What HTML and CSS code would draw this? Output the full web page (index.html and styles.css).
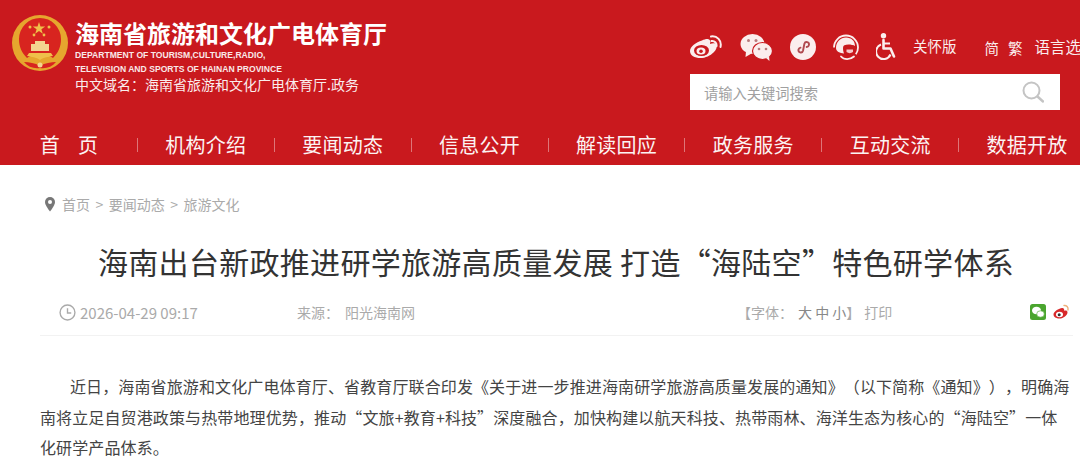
FILE: index.html
```html
<!DOCTYPE html>
<html lang="zh-CN">
<head>
<meta charset="UTF-8" />
<title>海南省旅游和文化广电体育厅</title>
<link rel="stylesheet" href="styles.css">
</head>
<body>

<!-- 顶部 -->
<header class="header">
  <div class="header-top">
    <div class="brand">
      <svg class="emblem" viewBox="0 0 60 60">
        <circle cx="30" cy="30" r="28" fill="#e6a62e"/>
        <path d="M30 5a21 21 0 0 1 21 21c0 8-3 14-8 19-4-3-9-3-13 0-4-3-9-3-13 0-5-5-8-11-8-19A21 21 0 0 1 30 5z" fill="#d8241f"/>
        <polygon points="29,9 30.500,13.500 35.200,13.500 31.400,16.300 32.800,20.800 29,18 25.200,20.800 26.600,16.300 22.800,13.500 27.500,13.500" fill="#efc04a"/>
        <circle cx="20" cy="14" r="1.500" fill="#efc04a"/>
        <circle cx="39" cy="14" r="1.500" fill="#efc04a"/>
        <circle cx="24" cy="22" r="1.400" fill="#efc04a"/>
        <circle cx="34" cy="22" r="1.400" fill="#efc04a"/>
        <path d="M25 28h10v3h4v7H21v-7h4z" fill="#f3d58f"/>
        <path d="M19 40h22l2 3c-5 1-9 1-13 4-4-3-8-3-13-4z" fill="#efc04a"/>
        <path d="M14 49c5 0 11 1 16 4 5-3 11-4 16-4-4 5-10 7-16 6-6 1-12-1-16-6z" fill="#d8241f"/>
        <circle cx="30" cy="52" r="2.500" fill="#f3d58f"/>
      </svg>
      <div class="brand-text">
        <div class="brand-title">海南省旅游和文化广电体育厅</div>
        <div class="brand-en">DEPARTMENT OF TOURISM,CULTURE,RADIO,<br>TELEVISION AND SPORTS OF HAINAN PROVINCE</div>
        <div class="brand-domain">中文域名：海南省旅游和文化广电体育厅.政务</div>
      </div>
    </div>
    <div class="tools">
      <div class="tool-row">
        <!-- 微博 -->
        <svg class="tool-icon weibo" viewBox="0 0 33 24">
          <path d="M13 5.500c4-2 7-2 8 0 .6 1.200.3 2.400 0 3.400 3-1 6-1 6.500 1 .8 2.500-.5 5-3 7.500-3 3-8 5.600-13 5.600-6 0-10.500-2.600-10.500-7.100C1 12 7 7 13 5.500z" fill="#fbeeee"/>
          <ellipse cx="12.500" cy="15.500" rx="7.500" ry="5.500" fill="#c9191e"/>
          <ellipse cx="12" cy="16" rx="4.500" ry="3.600" fill="#fbeeee"/>
          <circle cx="12" cy="16.200" r="1.800" fill="#c9191e"/>
          <path d="M22 1.500c6-1 11 4 9.500 10.500M22.500 6c3-.5 5.500 2 5 5" fill="none" stroke="#fbeeee" stroke-width="2" stroke-linecap="round"/>
        </svg>
        <!-- 微信 -->
        <svg class="tool-icon wechat" viewBox="0 0 33 27">
          <ellipse cx="12.500" cy="10" rx="12" ry="10" fill="#fbeeee"/>
          <path d="M6 17l-.5 6 6-3.500z" fill="#fbeeee"/>
          <circle cx="8.500" cy="6.500" r="1.500" fill="#b8797c"/>
          <circle cx="16" cy="6.500" r="1.500" fill="#b8797c"/>
          <ellipse cx="22.500" cy="17" rx="10" ry="8.500" fill="#fbeeee" stroke="#c9191e" stroke-width="1.200"/>
          <path d="M26 24l3.500 3-.5-5z" fill="#fbeeee"/>
          <circle cx="19" cy="15" r="1.300" fill="#b8797c"/>
          <circle cx="26" cy="15" r="1.300" fill="#b8797c"/>
        </svg>
        <!-- 小程序 -->
        <svg class="tool-icon mini" viewBox="0 0 26 26">
          <circle cx="13" cy="13" r="13" fill="#fbeeee"/>
          <path d="M8.500 15.500c-.6 3 3.600 4.300 4.500 1.200l1.400-7c.9-2.900 5-1.800 4.600 1.100-.2 1.200-1.200 2-2.300 2.200M8.500 15.500c.2-1 1-1.700 2-1.900" fill="none" stroke="#b04a50" stroke-width="1.900" stroke-linecap="round"/>
        </svg>
        <!-- 客服 -->
        <svg class="tool-icon service" viewBox="0 0 26 27">
          <path d="M1 13.500a12 12 0 0 1 24 0c0 2.500-.8 5-2.200 6.800" fill="none" stroke="#fbeeee" stroke-width="1.800"/>
          <path d="M3 14c0-6 4.500-10.500 10-10.500S22 7 22 12c-3-1.500-8-2-11-.5-1.500 1-1 5 0 8-4-.5-8-2-8-5.500z" fill="#fbeeee"/>
          <path d="M11 12c3-1.500 8-1 11 .5v4.500c0 2-3 4.500-5.500 4.500-2.500 0-5-2-5.500-4.500z" fill="#c9191e"/>
          <path d="M13.500 15.500h6.500v2.500c-2 1.500-4.500 1.500-6.500 0z" fill="#f6c9cb"/>
          <path d="M8 22.500c3 3.500 9 3.500 13 0" fill="none" stroke="#fbeeee" stroke-width="1.800" stroke-linecap="round"/>
        </svg>
        <!-- 无障碍 -->
        <svg class="tool-icon access" viewBox="0 0 22 28">
          <circle cx="7.500" cy="2.800" r="2.700" fill="#fbeeee"/>
          <path d="M7.500 7v8.500h7l3.500 8" fill="none" stroke="#fbeeee" stroke-width="2.600" stroke-linecap="round" stroke-linejoin="round"/>
          <path d="M8 10.500h6" stroke="#fbeeee" stroke-width="2"/>
          <path d="M5 11.500a7.500 7.500 0 1 0 9.500 10" fill="none" stroke="#fbeeee" stroke-width="2"/>
        </svg>
        <span class="care">关怀版</span>
        <span class="lang">简</span>
        <span class="lang lang-tc">繁</span>
        <span class="lang-select">语言选</span>
      </div>
      <div class="search">
        <span class="search-text">请输入关键词搜索</span>
        <svg class="search-icon" viewBox="0 0 22 22">
          <circle cx="9.500" cy="9.500" r="8" fill="none" stroke="#c4c4c4" stroke-width="2"/>
          <path d="M15.500 15.500l5.500 5" stroke="#c4c4c4" stroke-width="2.400" stroke-linecap="round"/>
        </svg>
      </div>
    </div>
  </div>
  <nav class="nav">
    <a class="nav-item nav-home">首<span class="nav-space"></span>页</a>
    <i class="nav-sep"></i>
    <a class="nav-item">机构介绍</a>
    <i class="nav-sep"></i>
    <a class="nav-item">要闻动态</a>
    <i class="nav-sep"></i>
    <a class="nav-item">信息公开</a>
    <i class="nav-sep"></i>
    <a class="nav-item">解读回应</a>
    <i class="nav-sep"></i>
    <a class="nav-item">政务服务</a>
    <i class="nav-sep"></i>
    <a class="nav-item">互动交流</a>
    <i class="nav-sep"></i>
    <a class="nav-item">数据开放</a>
  </nav>
</header>

<!-- 正文 -->
<main class="main">
  <div class="crumbs">
    <svg class="pin" viewBox="0 0 12 15">
      <path d="M6 0a5 5 0 0 1 5 5c0 3.500-5 9.500-5 9.500S1 8.500 1 5a5 5 0 0 1 5-5z" fill="#777"/>
      <circle cx="6" cy="5" r="2" fill="#fff"/>
    </svg>
    <span>首页</span><span class="crumb-sep">&gt;</span><span>要闻动态</span><span class="crumb-sep">&gt;</span><span>旅游文化</span>
  </div>
  <h1 class="title">海南出台新政推进研学旅游高质量发展 打造“海陆空”特色研学体系</h1>
  <div class="meta">
    <div class="meta-time">
      <svg class="clock" viewBox="0 0 16 16">
        <circle cx="8" cy="8" r="7" fill="none" stroke="#aaa" stroke-width="1.300"/>
        <path d="M8 4v4.500h3.500" fill="none" stroke="#aaa" stroke-width="1.300"/>
      </svg>
      <span>2026-04-29 09:17</span>
    </div>
    <div class="meta-source">来源：<span class="source-name">阳光海南网</span></div>
    <div class="meta-font">【字体：<span class="font-size">大 中 小</span>】<span class="print">打印</span></div>
    <div class="meta-share">
      <svg class="share-wechat" viewBox="0 0 16 16">
        <rect width="16" height="16" rx="2.500" fill="#4aa52e"/>
        <ellipse cx="6.500" cy="6.500" rx="4.500" ry="3.800" fill="#fff"/>
        <ellipse cx="10.500" cy="10" rx="3.800" ry="3.200" fill="#fff" stroke="#4aa52e" stroke-width=".6"/>
      </svg>
      <svg class="share-weibo" viewBox="0 0 18 16">
        <path d="M7 5c3-1.500 4.500-1 5 0 .3.700 0 1.400 0 1.800 2-.6 3.500 0 3.500 1.400 0 3-4 6.300-8 6.300-3.500 0-6-1.600-6-4C1.500 8.500 4 6 7 5z" fill="#d8282a"/>
        <ellipse cx="7.500" cy="10.500" rx="3.500" ry="2.800" fill="#fff"/>
        <circle cx="7.200" cy="10.700" r="1.500" fill="#333"/>
        <path d="M12 1.500c2.500-.4 4.500 1.600 4 4.500" fill="none" stroke="#eeb07a" stroke-width="1.400" stroke-linecap="round"/>
      </svg>
    </div>
  </div>
  <div class="article">
    <p>近日，海南省旅游和文化广电体育厅、省教育厅联合印发《关于进一步推进海南研学旅游高质量发展的通知》（以下简称《通知》），明确海南将立足自贸港政策与热带地理优势，推动“文旅+教育+科技”深度融合，加快构建以航天科技、热带雨林、海洋生态为核心的“海陆空”一体化研学产品体系。</p>
  </div>
</main>

</body>
</html>
```

FILE: styles.css
```css
/* 基础 */
* {
  margin: 0; padding: 0; box-sizing: border-box;
}
html, body {
  height: 466px;
  overflow: hidden;
  background: #fff;
  font-family: "Noto Sans CJK SC", "Liberation Sans", sans-serif;
  color: #333;
  text-spacing-trim: space-all;
}

/* 顶部 */
.header {
  height: 165px;
  background: #c9191e;
  color: #fff;
}
.header-top {
  height: 125px;
  display: flex;
  justify-content: space-between;
}
.brand {
  display: flex;
  padding: 13px 0 0 10px;
}
.emblem {
  width: 60px;
  height: 60px;
  margin-right: 5px;
}
.brand-text {
  margin-top: 2px;
}
.brand-title {
  font-size: 24px;
  font-weight: 700;
  line-height: 36px;
}
.brand-en {
  margin-top: -3px;
  font-size: 8.600px;
  font-weight: 700;
  line-height: 14px;
  font-family: "Liberation Sans", sans-serif;
  opacity: .9;
}
.brand-domain {
  margin-top: -4px;
  font-size: 14px;
  line-height: 24px;
  opacity: .92;
}

/* 右上工具 */
.tools {
  width: 390px;
  padding-top: 33px;
}
.tool-row {
  height: 28px;
  display: flex;
  align-items: center;
  white-space: nowrap;
}
.tool-icon {
  flex: none;
}
.weibo { width: 33px; height: 24px; margin-left: -1px; }
.wechat { width: 33px; height: 27px; margin-left: 18px; }
.mini { width: 26px; height: 26px; margin-left: 17px; }
.service { width: 26px; height: 27px; margin-left: 17px; }
.access { width: 22px; height: 28px; margin-left: 17px; }
.care {
  font-size: 14.500px;
  margin-left: 15px;
  padding-bottom: 3px;
  opacity: .92;
}
.lang {
  font-size: 14.500px;
  margin-left: 28px;
  padding-top: 1px;
  opacity: .92;
}
.lang-tc { margin-left: 9px; }
.lang-select {
  font-size: 15.500px;
  margin-left: 12px;
  padding-bottom: 2px;
  opacity: .92;
}
.search {
  width: 370px;
  height: 36px;
  margin-top: 13px;
  background: #fff;
  display: flex;
  align-items: center;
  justify-content: space-between;
  padding: 0 16px 0 14px;
}
.search-text {
  font-size: 14.250px;
  color: #a0a0a0;
}
.search-icon {
  width: 22px;
  height: 22px;
}

/* 导航 */
.nav {
  width: 1096px;
  height: 40px;
  margin-left: -1px;
  display: flex;
  align-items: center;
}
.nav-item {
  flex: 1;
  font-size: 20px;
  letter-spacing: .25px;
  line-height: 40px;
  text-align: center;
  color: #fff;
  white-space: nowrap;
  opacity: .95;
}
.nav-home {
  padding-left: 2px;
}
.nav-space {
  display: inline-block;
  width: 18px;
}
.nav-sep {
  width: 1px;
  height: 14px;
  background: rgba(255, 255, 255, 0.4);
}

/* 正文 */
.crumbs {
  margin-top: 27px;
  padding-left: 44px;
  display: flex;
  align-items: center;
  height: 24px;
  font-size: 14px;
  color: #aaa;
}
.pin {
  width: 12px;
  height: 15px;
  margin-right: 6px;
}
.crumb-sep {
  margin: 0 5.500px;
}
.title {
  margin-top: 23px;
  padding-left: 32px;
  font-size: 30px;
  font-weight: 400;
  letter-spacing: .3px;
  line-height: 44px;
  text-align: center;
  color: #333;
}
.meta {
  margin: 0 7px 0 40px;
  height: 53px;
  padding-top: 6px;
  display: flex;
  align-items: center;
  border-bottom: 1px solid #f2f2f2;
  font-size: 15px;
  color: #aaa;
}
.meta-time {
  width: 257px;
  padding-left: 19px;
  display: flex;
  align-items: center;
}
.clock {
  width: 17px;
  height: 17px;
  margin-right: 4px;
}
.meta-source {
  width: 440px;
  font-size: 14px;
}
.source-name {
  margin-left: 6px;
}
.meta-font {
  flex: 1;
  font-size: 14px;
}
.font-size {
  margin-left: 5px;
  color: #888;
}
.print {
  margin-left: 4px;
}
.meta-share {
  display: flex;
  align-items: center;
  gap: 6px;
  padding-right: 3px;
}
.share-wechat {
  width: 16px;
  height: 16px;
}
.share-weibo {
  width: 18px;
  height: 16px;
}
.article {
  padding: 35px 7px 0 40px;
  font-size: 16px;
  letter-spacing: .12px;
  line-height: 30.500px;
  color: #444;
}
.article p {
  text-indent: 30px;
}
```
